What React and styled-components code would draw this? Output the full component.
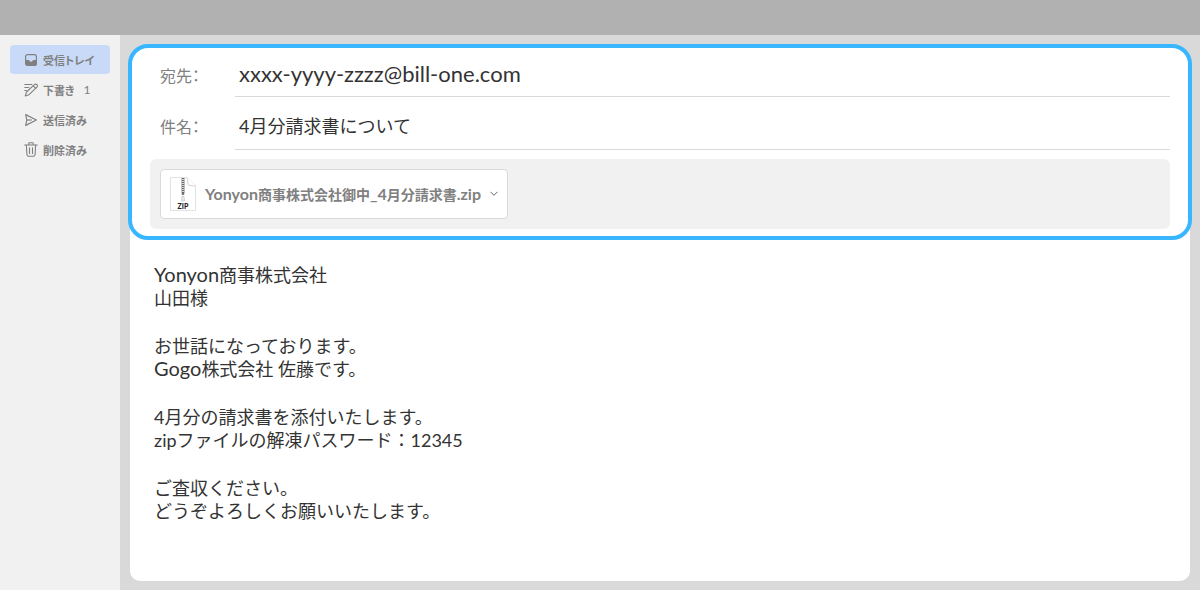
import styled, { createGlobalStyle } from "styled-components";

const InboxIcon = () => (
  <svg width="14" height="14" viewBox="0 0 14 14" aria-hidden="true">
    <rect x="1.6" y="1.6" width="10.8" height="10.8" rx="2" fill="none" stroke="#808080" strokeWidth="1.2" />
    <path d="M1.5 7h3.3c.3 0 .4.2.5.5.3.8.9 1.2 1.7 1.2s1.4-.4 1.7-1.2c.1-.3.2-.5.5-.5h3.3v3.400a2 2 0 0 1-2 2h-7a2 2 0 0 1-2-2z" fill="#808080" />
  </svg>
);

const DraftIcon = () => (
  <svg width="14" height="14" viewBox="0 0 14 14" fill="none" stroke="#808080" strokeWidth="1.1" strokeLinecap="round" strokeLinejoin="round" aria-hidden="true">
    <path d="M.8 1.500h7M.8 4.500h4M.8 7.500h1.500" />
    <path d="M1.300 12.900l1.200-3.900 7.900-7.400a1.800 1.800 0 0 1 2.500 2.600L5 11.700z" />
    <path d="M9.200 2.800l2.500 2.600" />
  </svg>
);

const SentIcon = () => (
  <svg width="14" height="14" viewBox="0 0 14 14" fill="none" stroke="#808080" strokeWidth="1.2" strokeLinejoin="round" aria-hidden="true">
    <path d="M1.700 1.600L12.400 7 1.700 12.400 2.800 7z" />
    <path d="M2.800 7h5" />
  </svg>
);

const TrashIcon = () => (
  <svg width="14" height="15" viewBox="0 0 14 15" fill="none" stroke="#808080" strokeWidth="1.1" strokeLinecap="round" strokeLinejoin="round" aria-hidden="true">
    <path d="M.7 3h12.600M4.800 2.800V1.300c0-.4.2-.6.6-.6h3.200c.4 0 .6.2.6.6v1.500" />
    <path d="M2.400 3.200l.5 9.300c.1 1.100.8 1.800 1.900 1.800h4.400c1.100 0 1.800-.7 1.900-1.800l.5-9.300" />
    <path d="M5.500 5.800v5.800M8.500 5.800v5.800" />
  </svg>
);

const ZipIcon = () => (
  <svg width="26" height="34" viewBox="0 0 26 34" aria-hidden="true">
    <path d="M.5.500h16.500l8.500 8.500v24.500H.500z" fill="#fff" stroke="#e2e2e2" />
    <path d="M17 .5l1 6.500q.3 1.500 2 1.500l5.500.5" fill="#fff" stroke="#d4d4d4" />
    <path d="M11.500 1v15M14.500 1v15" stroke="#b8b8b8" strokeWidth=".8" />
    <path d="M13 1v15" stroke="#666" strokeWidth="2.200" strokeDasharray="1.200 .8" />
    <path d="M11.800 16h2.400v2h-2.400z" fill="#777" />
    <path d="M12 19.500h2l.5 4.500h-3z" fill="#eee" stroke="#bbb" strokeWidth=".6" />
    <text x="13" y="31.500" textAnchor="middle" fontSize="7" fontWeight="900" fontFamily="Lato, sans-serif" fill="#222">
      ZIP
    </text>
  </svg>
);

const ChevronIcon = () => (
  <svg width="8" height="6" viewBox="0 0 8 6" fill="none" stroke="#666" aria-hidden="true">
    <path d="M.5 .8l3.500 3.500L7.500 .8" />
  </svg>
);

const FOLDERS = [
  { id: "inbox", name: "受信トレイ", Icon: InboxIcon },
  { id: "drafts", name: "下書き", Icon: DraftIcon, count: 1 },
  { id: "sent", name: "送信済み", Icon: SentIcon },
  { id: "trash", name: "削除済み", Icon: TrashIcon },
];

const App = () => (
  <>
    <GlobalStyle />
    <Page>
      <TopBar />
      <Layout>
        <Sidebar>
          {FOLDERS.map(({ id, name, Icon, count }) => (
            <FolderLink key={id} href={`#${id}`} $active={id === "inbox"}>
              <Icon />
              {name}
              {count && <FolderCount>{count}</FolderCount>}
            </FolderLink>
          ))}
        </Sidebar>
        <Main>
          <Mail>
            <MailHeader>
              <Field>
                <FieldLabel htmlFor="mail-to">宛先：</FieldLabel>
                <FieldInput id="mail-to" $size={22} $height={44} defaultValue="xxxx-yyyy-zzzz@bill-one.com" />
              </Field>
              <Field>
                <FieldLabel htmlFor="mail-subject">件名：</FieldLabel>
                <FieldInput id="mail-subject" $size={18} $height={48} defaultValue="4月分請求書について" />
              </Field>
              <Attachments>
                <AttachmentButton type="button">
                  <ZipIcon />
                  <span>
                    <Latin $size={16}>Yonyon</Latin>商事株式会社御中<Latin $size={16}>_4</Latin>月分請求書
                    <Latin $size={16}>.zip</Latin>
                  </span>
                  <ChevronIcon />
                </AttachmentButton>
              </Attachments>
            </MailHeader>
            <MailBody>
              <p>
                <Latin $size={20}>Yonyon</Latin>商事株式会社
                <br />
                山田様
              </p>
              <p>
                お世話になっております。
                <br />
                <Latin $size={20}>Gogo</Latin>株式会社 佐藤です。
              </p>
              <p>
                4月分の請求書を添付いたします。
                <br />
                zipファイルの解凍パスワード：12345
              </p>
              <p>
                ご査収ください。
                <br />
                どうぞよろしくお願いいたします。
              </p>
            </MailBody>
          </Mail>
        </Main>
      </Layout>
    </Page>
  </>
);

export default App;

const GlobalStyle = createGlobalStyle`
  * {
    box-sizing: border-box;
  }

  body {
    margin: 0;
    color: #333333;
    font-family: Lato, "Noto Sans CJK JP", sans-serif;
  }

  svg {
    flex-shrink: 0;
  }
`;

const Page = styled.div`
  display: flex;
  flex-direction: column;
  min-height: 100vh;
`;

const TopBar = styled.header`
  height: 35px;
  background: #b1b1b1;
`;

const Layout = styled.div`
  display: flex;
  flex: 1;
`;

const Sidebar = styled.nav`
  display: flex;
  flex-direction: column;
  gap: 1px;
  width: 120px;
  padding: 10px;
  background: #f1f1f1;
`;

const FolderLink = styled.a`
  display: flex;
  align-items: center;
  gap: 5px;
  height: 29px;
  padding-left: 14px;
  border-radius: 4px;
  background: ${({ $active }) => ($active ? "#c9daf8" : "transparent")};
  color: #808080;
  font-size: 11px;
  font-weight: bold;
  font-feature-settings: "palt";
  text-decoration: none;
`;

const FolderCount = styled.span`
  margin-left: 4px;
  font-size: 12px;
  font-weight: normal;
`;

const Main = styled.main`
  display: flex;
  flex: 1;
  padding: 9px 10px;
  background: #d9d9d9;
`;

const Mail = styled.article`
  flex: 1;
  border-radius: 20px 20px 10px 10px;
  background: white;
`;

const MailHeader = styled.form`
  display: flex;
  flex-direction: column;
  gap: 5px;
  margin: 0 -2px;
  padding: 5px 18px 7px;
  border: 4px solid #38b6ff;
  border-radius: 20px;
`;

const Field = styled.div`
  display: flex;
  align-items: center;
  padding-left: 10px;
`;

const FieldLabel = styled.label`
  width: 75px;
  color: #808080;
  font-size: 16px;
  font-feature-settings: "palt";
`;

const FieldInput = styled.input`
  flex: 1;
  min-width: 0;
  height: ${({ $height }) => $height}px;
  padding: 0 4px 2px;
  border: 0;
  border-bottom: 1px solid #d9d9d9;
  outline: none;
  background: transparent;
  color: inherit;
  font-family: inherit;
  font-size: ${({ $size }) => $size}px;
`;

const Attachments = styled.div`
  margin-top: 4px;
  padding: 10px;
  border-radius: 6px;
  background: #f1f1f1;
`;

const AttachmentButton = styled.button`
  display: flex;
  align-items: center;
  gap: 9px;
  height: 50px;
  padding: 0 9px;
  border: 1px solid #d9d9d9;
  border-radius: 4px;
  background: white;
  color: #808080;
  font-family: inherit;
  font-size: 14px;
  font-weight: bold;
`;

/* Lato runs small next to the Japanese glyphs */
const Latin = styled.span`
  font-size: ${({ $size }) => $size}px;
  line-height: 1;
`;

const MailBody = styled.section`
  padding: 24px;
  font-size: 18px;
  line-height: 23px;

  p {
    margin: 0 0 25px;
  }
`;
